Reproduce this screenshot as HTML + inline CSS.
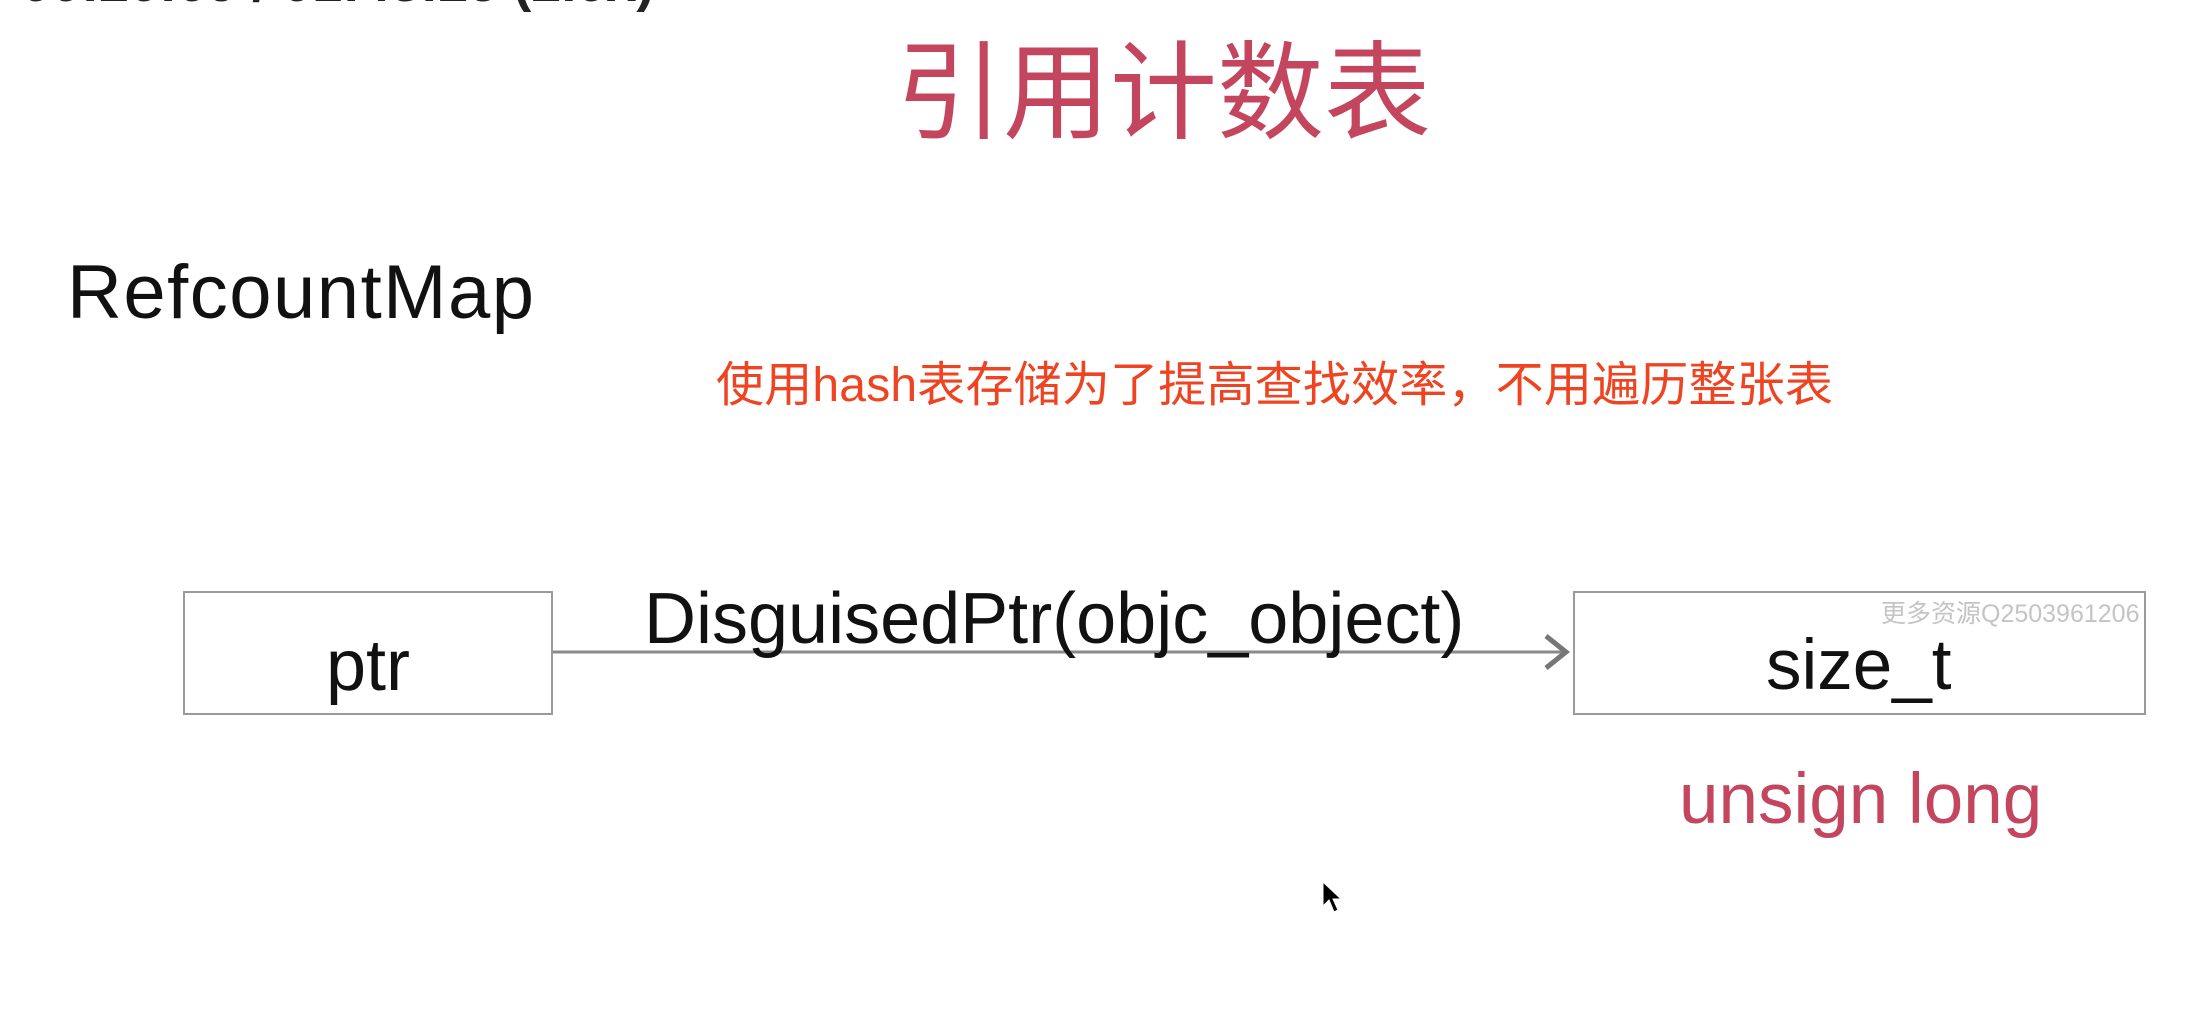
<!DOCTYPE html>
<html><head><meta charset="utf-8"><style>
html,body{margin:0;padding:0;width:2190px;height:1022px;overflow:hidden;background:#fff;position:relative}
div{position:absolute;white-space:nowrap;line-height:1}
.s{font-family:"Liberation Sans",sans-serif}
.c{font-family:"Liberation Sans","Noto Sans CJK SC",sans-serif}
.box{border:2px solid #9a9a9a;box-sizing:border-box}
</style></head><body>
<div class="s" style="left:21px;top:-44px;font-size:54px;color:#222;font-weight:bold">00:20:09 / 01:43:25 (2.0x)</div>
<div class="c" style="left:896px;top:40px;font-size:107px;color:#c4455e">引用计数表</div>
<div class="s" style="left:67px;top:255px;font-size:76px;color:#111;letter-spacing:1.5px">RefcountMap</div>
<div class="c" style="left:716px;top:362px;font-size:48px;color:#ee4422;letter-spacing:0.2px">使用hash表存储为了提高查找效率，不用遍历整张表</div>
<div class="box" style="left:183px;top:591px;width:370px;height:124px"></div>
<div class="box" style="left:1573px;top:591px;width:573px;height:124px"></div>
<svg style="position:absolute;left:0;top:0" width="2190" height="1022">
<line x1="553" y1="652" x2="1566" y2="652" stroke="#8a8a8a" stroke-width="3"/>
<polyline points="1546,636 1566,652 1546,668" fill="none" stroke="#777" stroke-width="5"/>
<path d="M1323,882 L1323,906 L1329,900 L1334,912 L1338,910 L1333,899 L1341,899 Z" fill="#000" stroke="#fff" stroke-width="1"/>
</svg>
<div class="s" style="left:644px;top:583px;font-size:72px;color:#111">DisguisedPtr(objc_object)</div>
<div class="s" style="left:326px;top:630px;font-size:72px;color:#111">ptr</div>
<div class="s" style="left:1766px;top:630px;font-size:71px;color:#111">size_t</div>
<div class="c" style="left:1881px;top:602px;font-size:25px;color:#c4c4c4">更多资源Q2503961206</div>
<div class="s" style="left:1679px;top:764px;font-size:71px;color:#c4455e">unsign long</div>
</body></html>
